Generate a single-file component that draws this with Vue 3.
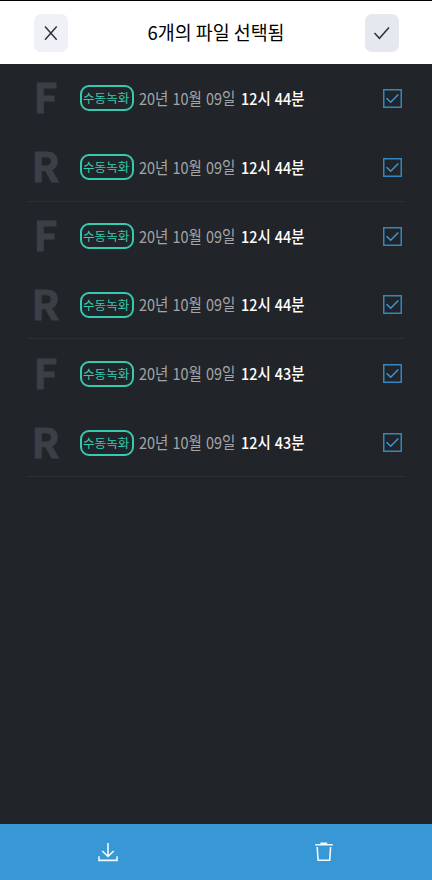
<template>
  <div class="screen">
    <header class="header">
      <button class="icon-btn" aria-label="닫기">
        <svg width="34" height="38" viewBox="0 0 34 38">
          <path d="M11 12.5 L22.7 25.7 M22.7 12.5 L11 25.7" />
        </svg>
      </button>
      <svg class="title" width="137" height="38">
        <text x="-0.5" y="26" textLength="137" lengthAdjust="spacingAndGlyphs">6개의 파일 선택됨</text>
      </svg>
      <button class="icon-btn confirm" aria-label="확인">
        <svg width="34" height="38" viewBox="0 0 34 38">
          <path d="M9.5 19 L14.4 24.3 L24 13.5" />
        </svg>
      </button>
    </header>

    <main class="list">
      <section v-for="(group, g) in groups" :key="g" class="group">
        <div v-for="camera in cameras" :key="camera" class="row">
          <span class="camera">{{ camera }}</span>
          <span class="badge">
            <svg width="47" height="20">
              <text x="0" y="14.6" textLength="46.5" lengthAdjust="spacingAndGlyphs">수동녹화</text>
            </svg>
          </span>
          <div class="date"><span>{{ group.date }}</span></div>
          <div class="time"><span>{{ group.time }}</span></div>
          <svg class="checkbox" width="19" height="19" viewBox="0 0 19 19">
            <rect x="0.75" y="0.75" width="17.5" height="17.5" />
            <path d="M3.6 9.3 L7.7 13.3 L15.3 5.4" />
          </svg>
        </div>
      </section>
    </main>

    <footer class="actions">
      <button class="action" aria-label="다운로드">
        <svg width="20" height="20" viewBox="0 0 20 20">
          <path d="M10 1 V14.5 M4.3 9 L10 14.5 L15.7 9 M1 14.3 V18.4 H19 V14.3" />
        </svg>
      </button>
      <button class="action" aria-label="삭제">
        <svg width="20" height="20" viewBox="0 0 20 20">
          <path d="M1.2 2.8 H18.8 M7.2 2.3 V1.2 H12.4 V2.3 M3.2 5 L4.1 18.3 H15.7 L16.6 5" />
        </svg>
      </button>
    </footer>
  </div>
</template>

<script setup>
const cameras = ['F', 'R']

const groups = [
  { date: '20년 10월 09일', time: '12시 44분' },
  { date: '20년 10월 09일', time: '12시 44분' },
  { date: '20년 10월 09일', time: '12시 43분' }
]
</script>

<style>
body {
  margin: 0;
  background: #212428;
}
</style>

<style scoped>
.screen {
  display: flex;
  flex-direction: column;
  width: 432px;
  height: 880px;
  overflow: hidden;
  background: #212428;
  font-family: "Noto Sans CJK KR", "Noto Sans", sans-serif;
}

button {
  padding: 0;
  border: 0;
  background: none;
}

svg {
  display: block;
  flex: none;
  overflow: visible;
}

path,
rect {
  fill: none;
}

.header {
  display: flex;
  align-items: center;
  justify-content: space-between;
  box-sizing: border-box;
  height: 64px;
  padding: 1px 33.5px 0;
  border-top: 1px solid #000;
  background: #fff;
}

.icon-btn {
  width: 34px;
  height: 38px;
  border-radius: 7px;
  background: #f0f1f7;
}

.icon-btn.confirm {
  background: #e5e8ef;
}

.icon-btn path {
  stroke: #30333a;
  stroke-width: 1.5;
}

.title text {
  font-size: 19px;
  fill: #000;
}

.list {
  flex: 1;
  padding: 0 27px;
}

.group {
  box-sizing: border-box;
  height: 137.67px;
  border-bottom: 1px solid #2c2f34;
}

.row {
  display: flex;
  align-items: center;
  height: 68.8px;
}

.camera {
  width: 37px;
  margin-right: 16px;
  padding-bottom: 6px;
  color: #3b3f46;
  font-size: 41px;
  font-weight: 700;
  line-height: 60px;
  text-align: center;
  -webkit-text-stroke: 0.9px #3b3f46;
}

.badge {
  display: flex;
  flex: none;
  align-items: center;
  justify-content: center;
  box-sizing: border-box;
  width: 53.5px;
  height: 26px;
  border: 2px solid #36cbb0;
  border-radius: 9px;
}

.badge text {
  font-size: 12.5px;
  fill: #36cbb0;
}

/* condensed labels: each span is squeezed into its column */
.date,
.time {
  flex: none;
  padding-bottom: 1px;
  font-size: 16.5px;
  line-height: 26px;
  word-spacing: 1px;
  white-space: nowrap;
}

.date span,
.time span {
  display: inline-block;
  transform-origin: left;
}

.date {
  width: 97px;
  margin-left: 5px;
  color: #a3a5a8;
}

.date span {
  transform: scaleX(0.877);
}

.time {
  width: 63px;
  margin-left: 5.5px;
  color: #fff;
  font-weight: 500;
}

.time span {
  transform: scaleX(0.872);
}

.checkbox {
  margin-left: auto;
  margin-right: 3px;
}

.checkbox rect,
.checkbox path {
  stroke: #3486be;
  stroke-width: 1.5;
}

.checkbox path {
  stroke: #3b98d7;
}

.actions {
  display: flex;
  height: 56px;
  background: #3898d6;
}

.action {
  display: flex;
  flex: 1;
  align-items: center;
  justify-content: center;
}

.action path {
  stroke: #f2f9fd;
  stroke-width: 1.6;
}
</style>
